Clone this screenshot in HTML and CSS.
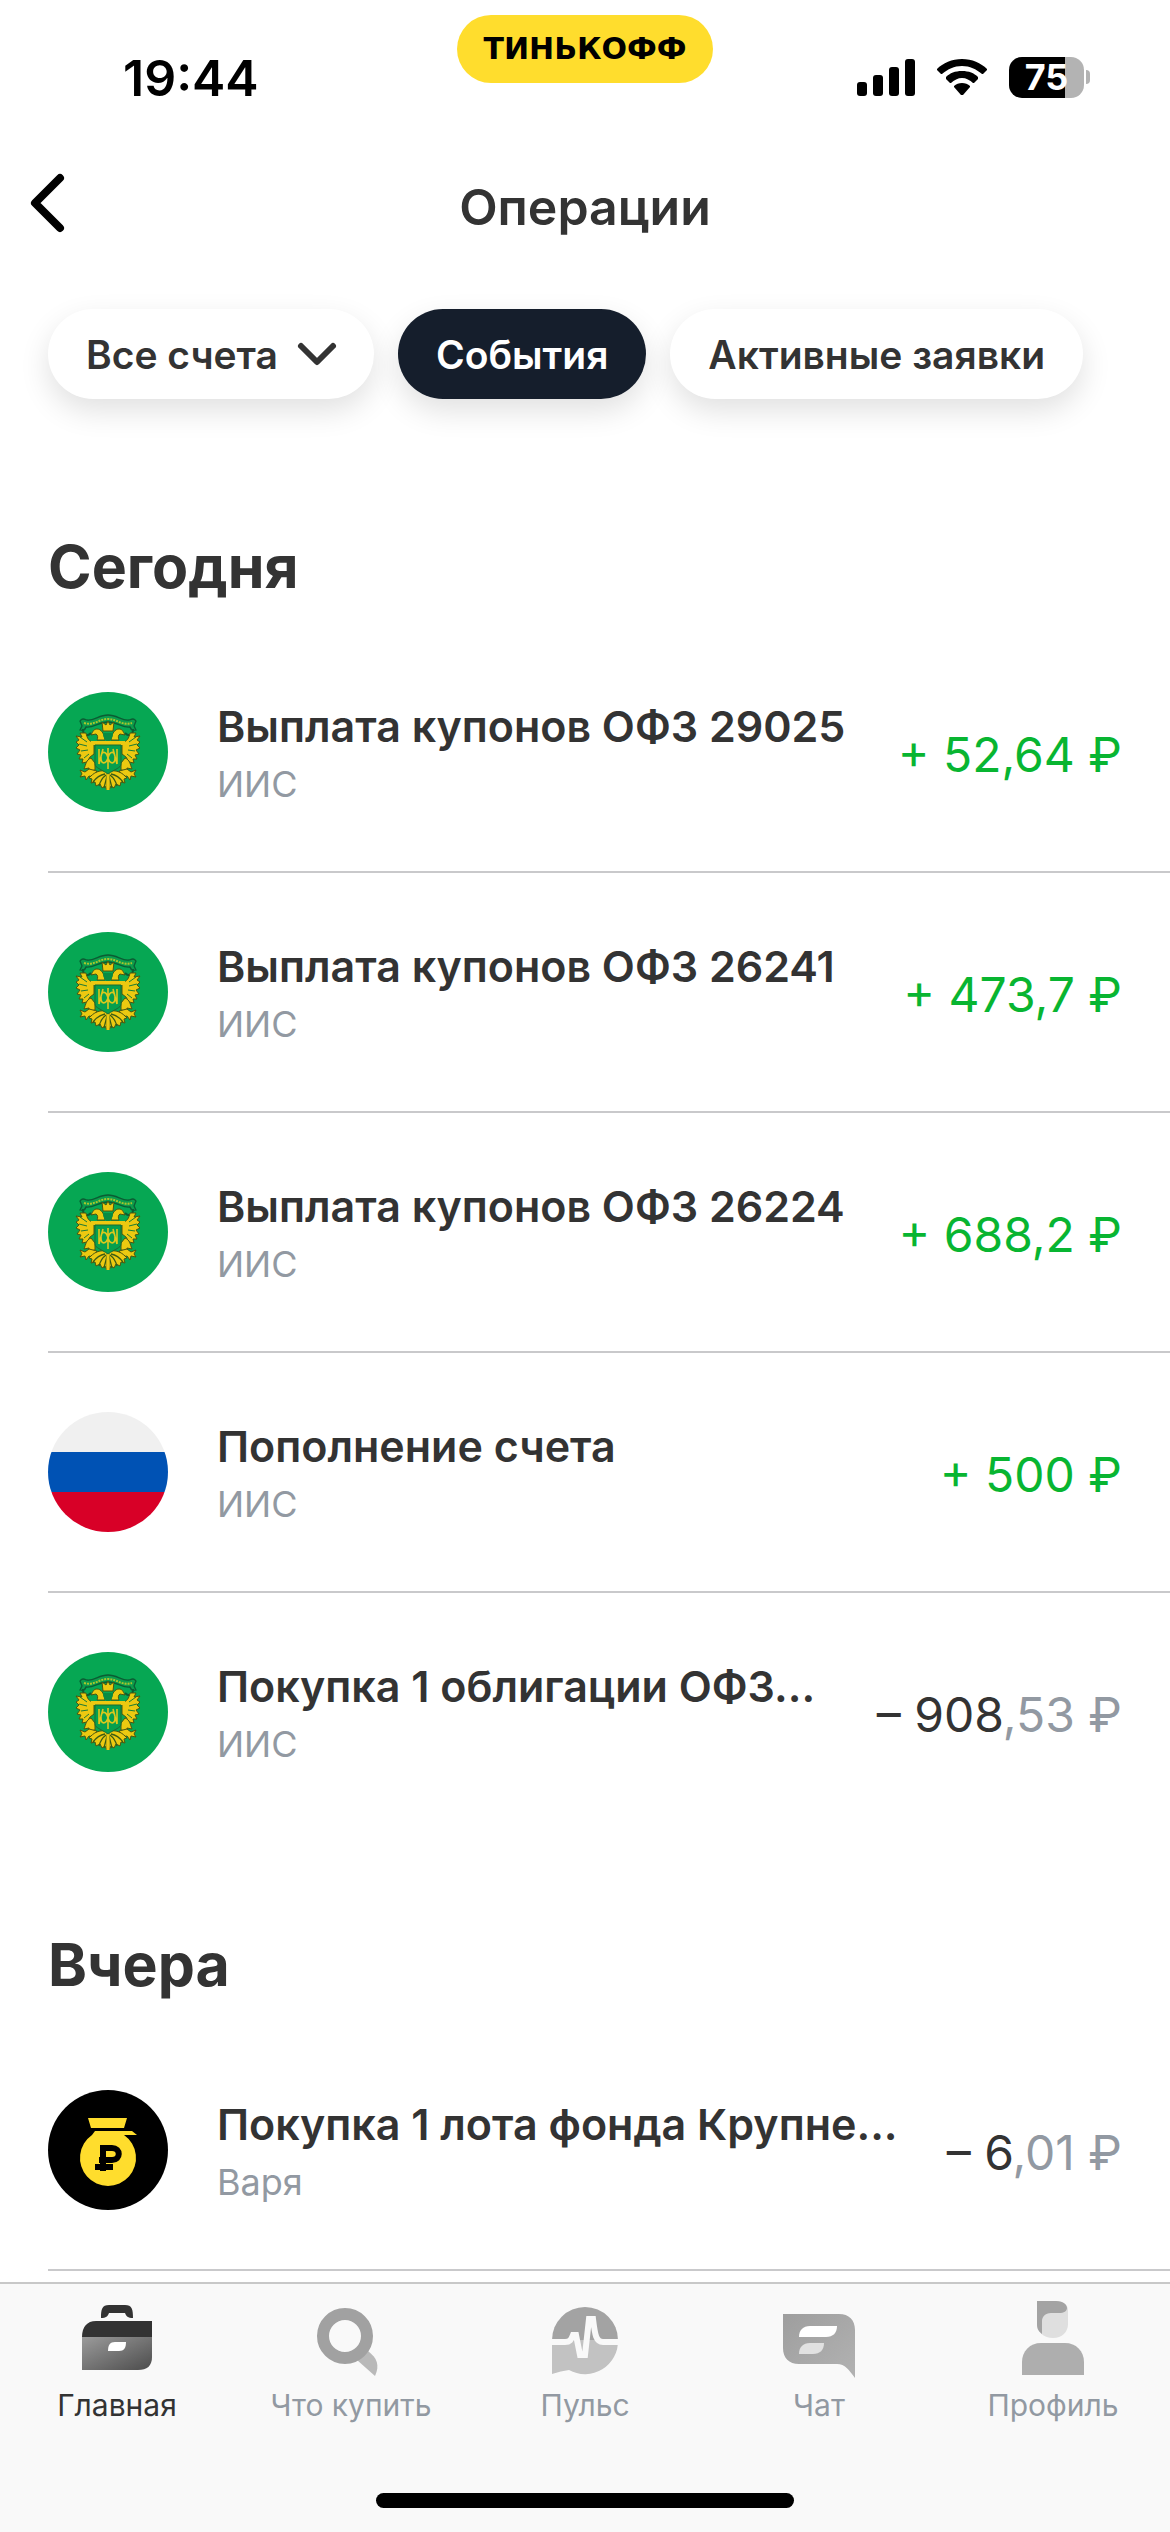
FILE: index.html
```html
<!DOCTYPE html>
<html lang="ru">
<head>
<meta charset="utf-8">
<meta name="viewport" content="width=device-width">
<title>Операции</title>
<link rel="stylesheet" href="styles.css">
</head>
<body>
<svg width="0" height="0" class="defs" aria-hidden="true">
  <defs>
    <linearGradient id="case" x1="0" y1="0" x2="1" y2="1"><stop offset="0" stop-color="#9b9b9b"/><stop offset="1" stop-color="#4c4c4c"/></linearGradient>
    <linearGradient id="chat" x1="0" y1="0" x2="1" y2="1"><stop offset="0" stop-color="#9e9e9e"/><stop offset="1" stop-color="#b2b2b2"/></linearGradient>
    <g id="half" stroke="#4a5610" stroke-width="1" stroke-linejoin="round" fill="#ecc911">
      <path d="M46 50c-5 0-7-4-8-9l-6 0 2 4-6-1 3 4-3 2 3 3-3 3 4 2-3 4 4 1-2 4 4 0-1 4 5-1 3-5 4-3z"/>
      <path d="M32 45l7 5M31 52l8 2M33 59l7-1M36 66l5-4" fill="none" stroke="#1d7a35"/>
      <path d="M57 48c-1-7-4-11-8-11-3 0-4 2-6 6l5-1c2 1 2 4 1 6z"/>
      <path d="M43 66c-5 2-5 6-7 11l5-1 0 3 6-1 0-7z"/>
      <path d="M41 77l-4 3-5-2 2 4-2 3 5-1 1 4 3-4 5 1 3-6z"/>
      <path d="M59 79c-7-1-12 1-16 5l-2 2 3 1-1 4 4-1 1 4 4-2 2 4 3-2 2 4z"/>
      <path d="M57 82c-5 1-9 4-12 8M58 83c-4 3-6 7-7 11M59 84l-3 12" fill="none" stroke="#3b5c14" stroke-width="1.3"/>
    </g>
    <symbol id="emblem" viewBox="0 0 120 120">
      <circle cx="60" cy="60" r="60" fill="#06a753"/>
      <path d="M32 29c2-3 4-2 7-1 7 1 12-5 21-5s14 6 21 5c3-1 5-2 7 1l-2 5 2 4c-3 1-5 0-6-3-8 1-12-5-22-5s-14 6-22 5c-1 3-3 4-6 3l2-4z" fill="#0c9c4c" stroke="#0b5c33" stroke-width="1.3"/>
      <path d="M35 37c0 7 4 8 8 4M85 37c0 7-4 8-8 4" fill="none" stroke="#0b5c33" stroke-width="2"/>
      <path d="M36 31c10 3 15-4 24-4s14 7 24 4" fill="none" stroke="#a9c62c" stroke-width="2" stroke-dasharray="2 1"/>
      <use href="#half"/>
      <use href="#half" transform="matrix(-1 0 0 1 120 0)"/>
      <path d="M60 80v18" stroke="#ecc911" stroke-width="3"/>
      <path d="M54 30l4 3 2-4 2 4 4-3-1 9H55z" fill="#ecc911" stroke="#4a5610" stroke-width="1"/>
      <path d="M55 41h10c0 5-2 7-5 9-3-2-5-4-5-9z" fill="#078b43"/>
      <path d="M43 49h34v4H43z" fill="#ecc911"/>
      <path d="M47 53h26v19c0 4-6 5-13 10-7-5-13-6-13-10z" fill="#06a04e" stroke="#1d6a30" stroke-width="1"/>
      <path d="M51 57v15M55 57l-4 15M69 57v15M65 57l4 15M60 56v21M53 66c0-7 5-8 7 0 2-8 7-7 7 0s-5 6-7 0c-2 6-7 7-7 0z" stroke="#dcc81c" stroke-width="1.6" fill="none"/>
    </symbol>
  </defs>
</svg>

<header class="status">
  <time class="clock">19:44</time>
  <div class="brand">ТИНЬКОФФ</div>
  <div class="signals">
    <svg width="58" height="38" viewBox="0 0 58 38" aria-label="Сигнал"><rect x="0" y="24" width="10" height="14" rx="3"/><rect x="16" y="17" width="10" height="21" rx="3"/><rect x="32" y="9" width="10" height="29" rx="3"/><rect x="48" y="1" width="10" height="37" rx="3"/></svg>
    <svg width="52" height="38" viewBox="0 0 52 38" aria-label="Wi-Fi"><path d="M26 1C16 1 7 5 1 11l0 1 4 4 1 0C12 11 18 8 26 8s14 3 20 8l1 0 4-4 0-1C45 5 36 1 26 1zM26 13c-7 0-12 2-16 6l0 2 4 4 1 0c3-3 7-5 11-5s8 2 11 5l1 0 4-4 0-2c-4-4-9-6-16-6zM26 25c-3 0-6 1-8 3l0 1 7 8 2 0 7-8 0-1c-2-2-5-3-8-3z"/></svg>
    <div class="battery"><span class="cell">75</span><i class="tip"></i></div>
  </div>
</header>

<nav class="bar">
  <button class="back" type="button" aria-label="Назад"><svg width="40" height="64" viewBox="0 0 40 64"><path d="M34 6 9 31 34 56" fill="none" stroke="#000" stroke-width="8" stroke-linecap="round" stroke-linejoin="round"/></svg></button>
  <h1 class="title">Операции</h1>
</nav>

<div class="filters">
  <button class="chip" type="button">Все счета<svg width="38" height="24" viewBox="0 0 38 24"><path d="M3 4 19 20 35 4" fill="none" stroke="#333" stroke-width="6" stroke-linecap="round" stroke-linejoin="round"/></svg></button>
  <button class="chip chip-active" type="button">События</button>
  <button class="chip" type="button">Активные заявки</button>
</div>

<main>
  <section>
    <h2 class="day">Сегодня</h2>
    <ul class="list">
      <li class="row"><svg class="logo" viewBox="0 0 120 120"><use href="#emblem"/></svg><div class="info"><p class="name">Выплата купонов ОФЗ 29025</p><p class="account">ИИС</p></div><p class="sum plus">+ 52,64 ₽</p></li>
      <li class="row"><svg class="logo" viewBox="0 0 120 120"><use href="#emblem"/></svg><div class="info"><p class="name">Выплата купонов ОФЗ 26241</p><p class="account">ИИС</p></div><p class="sum plus">+ 473,7 ₽</p></li>
      <li class="row"><svg class="logo" viewBox="0 0 120 120"><use href="#emblem"/></svg><div class="info"><p class="name">Выплата купонов ОФЗ 26224</p><p class="account">ИИС</p></div><p class="sum plus">+ 688,2 ₽</p></li>
      <li class="row"><div class="logo flag"></div><div class="info"><p class="name">Пополнение счета</p><p class="account">ИИС</p></div><p class="sum plus">+ 500 ₽</p></li>
      <li class="row last"><svg class="logo" viewBox="0 0 120 120"><use href="#emblem"/></svg><div class="info"><p class="name">Покупка 1 облигации ОФЗ...</p><p class="account">ИИС</p></div><p class="sum">– 908<span class="cents">,53 ₽</span></p></li>
    </ul>
  </section>
  <section>
    <h2 class="day">Вчера</h2>
    <ul class="list">
      <li class="row"><svg class="logo" viewBox="0 0 120 120"><circle cx="60" cy="60" r="60"/><path d="M40 28h39l-3 10H43zM47 41h37l5 4H76a28 28 0 1 1-32 0z" fill="#ffdd2d"/><path d="M55 81V58h9c9 0 9 12 0 12H51M47 77h18" fill="none" stroke="#000" stroke-width="6"/></svg><div class="info"><p class="name">Покупка 1 лота фонда Крупне...</p><p class="account">Варя</p></div><p class="sum">– 6<span class="cents">,01 ₽</span></p></li>
    </ul>
  </section>
</main>

<footer class="dock">
  <nav class="tabs">
    <a class="tab tab-active" href="#home"><svg width="90" height="84" viewBox="0 0 90 84"><path d="M29 34c0-9 1-13 8-13h16c7 0 8 4 8 13-5 0-7-2-8-5H37c-1 3-3 5-8 5z" fill="#333"/><path d="M10 53c0-10 5-16 14-16h56v16z" fill="#333"/><path d="M10 53h70v20c0 9-5 13-14 13H10z" fill="url(#case)"/><path d="M36 67c0-6 2-9 7-9h11c0 6-2 9-7 9z" fill="#fff"/></svg>Главная</a>
    <a class="tab" href="#buy"><svg width="90" height="84" viewBox="0 0 90 84"><path d="M51 76l11-9c9 7 12 14 7 25z" fill="#b9b9b9"/><circle cx="39" cy="52" r="22" fill="none" stroke="#a1a1a1" stroke-width="12"/></svg>Что купить</a>
    <a class="tab" href="#pulse"><svg width="90" height="84" viewBox="0 0 90 84"><path d="M12 56a33 33 0 0 1 66 0z" fill="#a3a3a3"/><path d="M12 56h66a33 33 0 0 1-49 30q-8 1-17 4z" fill="#c2c2c2"/><path d="M12 58h13c5 0 6-2 8-7h3l4 20h5l4-36h4c2 16 3 23 10 23h15" fill="none" stroke="#f9f9f9" stroke-width="6"/></svg>Пульс</a>
    <a class="tab" href="#chat"><svg width="90" height="84" viewBox="0 0 90 84"><path d="M9 30h56c10 0 16 6 16 16v48c-6-8-10-14-18-14H25c-10 0-16-6-16-16z" fill="url(#chat)"/><path d="M25 53c0-7 4-11 11-11h27c0 7-4 11-11 11z" fill="#fff"/><path d="M25 70c0-7 4-11 11-11h14c0 7-4 11-11 11z" fill="#e1e1e1"/></svg>Чат</a>
    <a class="tab" href="#profile"><svg width="90" height="84" viewBox="0 0 90 84"><path d="M29 17h19c7 0 12 4 12 9v14c0 8-6 14-15 14s-16-6-16-14z" fill="#dfdfdf"/><path d="M29 17h19c8 0 11 4 11 7s-3 5-8 5H43c-6 0-9 4-9 8v13c-4-3-5-6-5-10z" fill="#a3a3a3"/><path d="M14 91V78c0-11 8-19 19-19h24c11 0 19 8 19 19v13z" fill="#aeaeae"/></svg>Профиль</a>
  </nav>
  <div class="home"></div>
</footer>
</body>
</html>
```
FILE: styles.css
```css
* { box-sizing: border-box; margin: 0; padding: 0; }
body {
  min-height: 100vh;
  display: flex;
  flex-direction: column;
  background: #fff;
  color: #333;
  font-family: Inter, "Liberation Sans", sans-serif;
}
button { border: 0; background: none; font: inherit; color: inherit; }
svg { display: block; flex: none; overflow: visible; }
.defs { position: absolute; }

.status {
  display: grid;
  grid-template-columns: 1fr auto 1fr;
  height: 156px;
}
.clock { padding: 46px 0 0 123px; font-size: 50px; line-height: 64px; font-weight: 600; color: #000; }
.brand {
  height: 68px;
  margin-top: 15px;
  padding: 0 26px;
  border-radius: 34px;
  background: #ffdd2d;
  color: #000;
  font: bold 30px/68px "DejaVu Sans", sans-serif;
}
.signals { display: flex; justify-content: flex-end; align-items: center; height: 40px; margin-top: 57px; padding-right: 80px; gap: 21px; }
.battery { display: flex; align-items: center; gap: 2px; }
.cell {
  width: 75px;
  border-radius: 13px;
  background: linear-gradient(to right, #000 75%, #b3b3b3 75%);
  color: #fff;
  text-align: center;
  font-size: 36px;
  line-height: 41px;
  font-weight: 700;
}
.tip { width: 4px; height: 14px; border-radius: 0 4px 4px 0; background: #b3b3b3; }

.bar { display: grid; grid-template-columns: 1fr auto 1fr; height: 102px; align-items: center; }
.back { justify-self: start; align-self: start; padding: 16px 0 0 26px; }
.title { font-size: 50px; line-height: 60px; font-weight: 600; }

.filters { display: flex; gap: 24px; padding: 51px 48px 0; height: 177px; align-items: flex-start; }
.chip {
  display: flex;
  align-items: center;
  gap: 20px;
  height: 90px;
  padding: 0 38px;
  border-radius: 45px;
  background: #fff;
  box-shadow: 0 12px 30px rgba(0, 0, 0, 0.12);
  font-size: 39px;
  font-weight: 600;
  white-space: nowrap;
}
.chip-active { background: #151e2c; color: #fff; }

.day { height: 198px; padding: 96px 48px 0; font-size: 59px; line-height: 72px; font-weight: 700; }
.list { list-style: none; padding-left: 48px; }
.row {
  display: flex;
  align-items: center;
  gap: 49px;
  height: 240px;
  padding-right: 48px;
  border-bottom: 2px solid #c9c9cb;
}
.last { border-bottom-color: transparent; }
.logo { width: 120px; height: 120px; flex: none; }
.flag { border-radius: 50%; background: linear-gradient(#f0f0f0 33%, #0052b4 33% 67%, #d80027 67%); }
.info { flex: 1; min-width: 0; padding-top: 8px; }
.name { font-size: 43px; line-height: 56px; font-weight: 600; white-space: nowrap; }
.account { font-size: 36px; line-height: 60px; color: #9299a2; }
.sum { padding-top: 6px; font-size: 48px; line-height: 60px; white-space: nowrap; }
.plus { color: #08b531; }
.cents { color: #9299a2; }

.dock { margin-top: auto; border-top: 2px solid #c8c8c8; background: #f9f9f9; padding-bottom: 24px; }
.tabs { display: grid; grid-template-columns: repeat(5, 1fr); height: 209px; }
.tab { display: flex; flex-direction: column; align-items: center; gap: 17px; color: #9299a2; text-decoration: none; font-size: 30px; line-height: 40px; white-space: nowrap; }
.tab-active { color: #333; }
.home { width: 36%; max-width: 418px; height: 15px; margin: 0 auto; border-radius: 8px; background: #000; }
```
